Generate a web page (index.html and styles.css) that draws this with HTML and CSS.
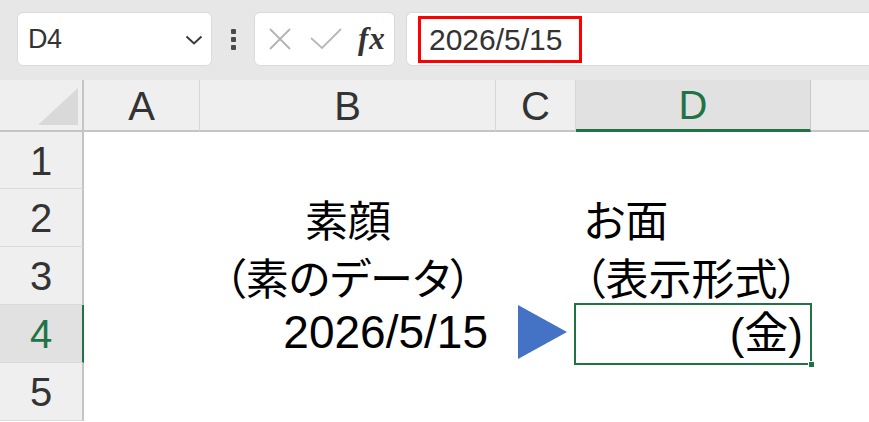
FILE: index.html
```html
<!DOCTYPE html>
<html lang="ja">
<head>
<meta charset="utf-8">
<title>Book1 - Excel</title>
<link rel="stylesheet" href="styles.css">
</head>
<body>
<div class="app">
  <div class="toolbar">
    <div class="namebox">
      <span class="namebox-text">D4</span>
      <svg class="chevron" width="18" height="10" viewBox="0 0 18 10"><path d="M1.5 1.5 L9 8.5 L16.5 1.5" fill="none" stroke="#3a3a3a" stroke-width="2"/></svg>
    </div>
    <div class="kebab"><span></span><span></span><span></span></div>
    <div class="fxbox">
      <svg class="btn-icon" width="24" height="24" viewBox="0 0 24 24"><path d="M2 2 L22 22 M22 2 L2 22" stroke="#b3b3b3" stroke-width="1.8" fill="none"/></svg>
      <svg class="btn-icon" width="32" height="24" viewBox="0 0 32 24"><path d="M1 11 L12 21 L31 2" stroke="#b8b8b8" stroke-width="1.8" fill="none"/></svg>
      <span class="fx">fx</span>
    </div>
    <div class="formula">
      <span class="formula-mark">2026/5/15</span>
    </div>
  </div>

  <div class="sheet">
    <div class="corner"><svg width="84" height="52" viewBox="0 0 84 52"><polygon points="78,8 78,45 38,45" fill="#d9d9d9"/></svg></div>
    <div class="colhead">A</div>
    <div class="colhead">B</div>
    <div class="colhead">C</div>
    <div class="colhead selected">D</div>
    <div class="colhead last"></div>

    <div class="rowhead">1</div>
    <div class="cell"></div><div class="cell"></div><div class="cell"></div><div class="cell"></div><div class="cell"></div>

    <div class="rowhead">2</div>
    <div class="cell"></div>
    <div class="cell center"><span class="jp">素顔</span></div>
    <div class="cell"></div>
    <div class="cell left"><span class="jp">お面</span></div>
    <div class="cell"></div>

    <div class="rowhead">3</div>
    <div class="cell"></div>
    <div class="cell center"><span class="jp">（素のデータ）</span></div>
    <div class="cell"></div>
    <div class="cell left"><span class="jp">（表示形式）</span></div>
    <div class="cell"></div>

    <div class="rowhead active">4</div>
    <div class="cell"></div>
    <div class="cell right"><span class="num">2026/5/15</span></div>
    <div class="cell arrow-cell"><svg width="49" height="54" viewBox="0 0 49 54"><polygon points="0,0 49,27 0,54" fill="#4472c4"/></svg></div>
    <div class="cell right active-cell"><span class="num-jp">(金)</span><span class="fill-handle"></span></div>
    <div class="cell"></div>

    <div class="rowhead">5</div>
    <div class="cell"></div><div class="cell"></div><div class="cell"></div><div class="cell"></div><div class="cell"></div>
  </div>
</div>
</body>
</html>
```

FILE: styles.css
```css
* { box-sizing: border-box; }

html, body {
  margin: 0;
  padding: 0;
  background: #ffffff;
}

.app {
  width: 869px;
  height: 422px;
  overflow: hidden;
  font-family: "Liberation Sans", "Noto Sans CJK JP", sans-serif;
}

/* ---------- formula toolbar ---------- */
.toolbar {
  height: 80px;
  background: #e7e7e7;
  display: flex;
  align-items: flex-start;
  padding: 12px 0 0 17px;
  overflow: hidden;
}

.toolbar > * { flex-shrink: 0; }

.namebox {
  width: 195px;
  height: 54px;
  background: #ffffff;
  border: 1px solid #dadada;
  border-radius: 6px;
  display: flex;
  align-items: center;
  justify-content: space-between;
  padding: 0 8px 0 10px;
}

.namebox-text {
  font-size: 27px;
  color: #333333;
  letter-spacing: -0.5px;
}

.chevron { margin-top: 2px; }

.kebab {
  width: 42px;
  height: 54px;
  display: flex;
  flex-direction: column;
  align-items: center;
  justify-content: center;
  gap: 3px;
}

.kebab span {
  width: 5px;
  height: 5px;
  background: #4a4a4a;
  border-radius: 1px;
}

.fxbox {
  width: 141px;
  height: 54px;
  background: #ffffff;
  border: 1px solid #dadada;
  border-radius: 6px;
  display: flex;
  align-items: center;
  padding: 0 0 0 13px;
  gap: 18px;
}

.fx {
  font-family: "Liberation Serif", "DejaVu Serif", serif;
  font-style: italic;
  font-weight: bold;
  font-size: 31px;
  color: #333333;
  margin-left: -2px;
  letter-spacing: 1px;
}

.formula {
  width: 480px;
  margin-left: 11px;
  height: 54px;
  background: #ffffff;
  border: 1px solid #dadada;
  border-right: none;
  border-radius: 6px 0 0 6px;
  display: flex;
  align-items: center;
  padding-left: 11px;
}

.formula-mark {
  height: 47px;
  width: 164px;
  border: 3px solid #ff0000;
  display: flex;
  align-items: center;
  padding-left: 8px;
  font-size: 30px;
  color: #333333;
  margin-top: 1px;
}

/* ---------- sheet grid ---------- */
.sheet {
  display: grid;
  grid-template-columns: 84px 116px 296px 80px 235px 1fr;
  grid-template-rows: 52px 57px repeat(4, 58px);
  background: #ffffff;
}

.corner {
  background: #efefef;
  border-right: 2px solid #c4c4c4;
  border-bottom: 2px solid #c4c4c4;
}

.corner svg { display: block; }

.colhead {
  background: #efefef;
  border-right: 1px solid #d7d7d7;
  border-bottom: 2px solid #c4c4c4;
  display: flex;
  align-items: center;
  justify-content: center;
  font-size: 40px;
  color: #333333;
  padding-top: 2px;
}

.colhead.last { border-right: none; }

.colhead.selected {
  background: #e1e1e1;
  color: #217346;
  border-bottom: 3px solid #217346;
  border-right: 1px solid #c8c8c8;
}

.rowhead {
  background: #efefef;
  border-right: 2px solid #c4c4c4;
  border-bottom: 1px solid #dadada;
  display: flex;
  align-items: center;
  justify-content: center;
  font-size: 40px;
  color: #333333;
  padding-top: 2px;
}

.rowhead.active {
  background: #e1e1e1;
  color: #217346;
  border-right-color: #217346;
}

.cell {
  display: flex;
  align-items: flex-end;
  padding-bottom: 7px;
  color: #000000;
  line-height: 1;
}

.cell.center { justify-content: center; }
.cell.left { justify-content: flex-start; padding-left: 8px; }
.cell.right { justify-content: flex-end; padding-right: 8px; }

.jp {
  font-family: "Noto Sans CJK JP", sans-serif;
  font-size: 43px;
  font-feature-settings: "palt";
}

.num {
  font-size: 46px;
  padding-bottom: 1px;
}

.num-jp {
  font-family: "Liberation Sans", "Noto Sans CJK JP", sans-serif;
  font-size: 44px;
}

.arrow-cell {
  align-items: center;
  justify-content: flex-end;
  padding: 0 9px 4px 0;
}

.arrow-cell svg { display: block; }

.active-cell { position: relative; }

/* selection outline drawn over the cell edges */
.active-cell::after {
  content: "";
  position: absolute;
  left: -2px;
  top: -2px;
  right: -1px;
  bottom: -2px;
  border: 2px solid #217346;
  pointer-events: none;
}

.fill-handle {
  position: absolute;
  right: -4px;
  bottom: -5px;
  width: 7px;
  height: 7px;
  background: #217346;
  border: 1px solid #ffffff;
  z-index: 1;
}
```
